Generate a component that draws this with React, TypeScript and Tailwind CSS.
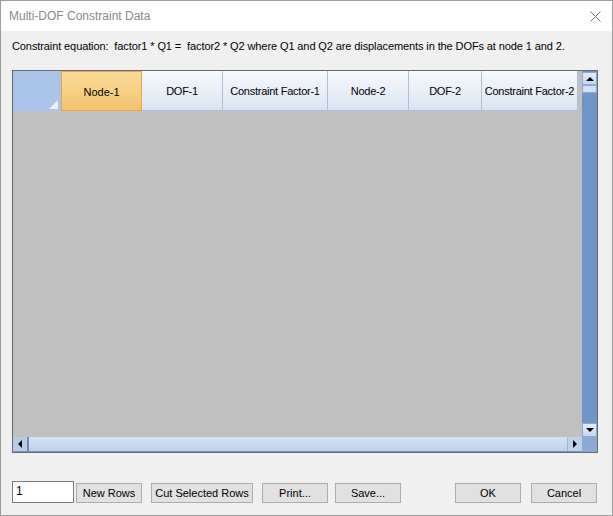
import { useState } from "react";

const columns = [
  { label: "Node-1", w: "w-[81px]", active: true },
  { label: "DOF-1", w: "w-[81px]" },
  { label: "Constraint Factor-1", w: "w-[105px]" },
  { label: "Node-2", w: "w-[81px]" },
  { label: "DOF-2", w: "w-[73px]" },
  { label: "Constraint Factor-2", w: "w-[96px]" },
];

function Tri({ dir }: { dir: "up" | "down" | "left" | "right" }) {
  const pts = {
    up: "0,5 4,1 8,5",
    down: "0,1 8,1 4,5",
    left: "5,0 5,8 1,4",
    right: "1,0 1,8 5,4",
  }[dir];
  const horiz = dir === "left" || dir === "right";
  return (
    <svg width={horiz ? 6 : 8} height={horiz ? 8 : 6} viewBox={horiz ? "0 0 6 8" : "0 0 8 6"}>
      <polygon points={pts} fill="#000" />
    </svg>
  );
}

function Btn({ children, className = "" }: { children: React.ReactNode; className?: string }) {
  return (
    <button className={`h-[20px] w-[66px] border border-[#adadad] bg-[#e1e1e1] text-[11px] leading-none text-black ${className}`}>
      {children}
    </button>
  );
}

export default function App() {
  const [rows, setRows] = useState("1")

  return (
    <div
      className="flex h-[516px] w-[613px] flex-col border border-[#9c9c9c] bg-[#f0f0f0] text-black"
      style={{ fontFamily: '"Liberation Sans", Arial, sans-serif' }}
    >
      {/* title bar */}
      <div className="flex h-[30px] shrink-0 items-center justify-between bg-white pl-[8px] pr-[11px]">
        <span className="text-[12px] text-[#8a8a8a]">Multi-DOF Constraint Data</span>
        <svg width="11" height="11" viewBox="0 0 11 11">
          <path d="M0.5 0.5 L10.5 10.5 M10.5 0.5 L0.5 10.5" stroke="#6f6f6f" strokeWidth="1" />
        </svg>
      </div>

      <div className="flex flex-1 flex-col px-[11px]">
        <p className="mt-[9px] text-[11px] leading-[13px] tracking-[-0.1px]">
          Constraint equation:&nbsp; factor1 * Q1 =&nbsp; factor2 * Q2 where Q1 and Q2 are displacements in the DOFs at node 1 and 2.
        </p>

        {/* grid */}
        <div className="mt-[17px] flex h-[383px] w-[586px] flex-col border border-[#666a70]">
          <div className="flex h-[366px]">
            <div className="flex flex-1 flex-col bg-[#c0c0c0]">
              <div className="flex h-[40px]">
                <div className="relative w-[48px] bg-[#aac4e9]">
                  <svg className="absolute bottom-[2px] right-[3px]" width="9" height="9" viewBox="0 0 9 9">
                    <polygon points="9,0 9,9 0,9" fill="#eef3fb" />
                  </svg>
                </div>
                {columns.map((c) =>
                  c.active ? (
                    <div
                      key={c.label}
                      className={`${c.w} flex items-center justify-center whitespace-nowrap border border-[#e8a64c] bg-gradient-to-b from-[#f9da98] to-[#f3c46c] pt-[2px] text-[11px]`}
                    >
                      {c.label}
                    </div>
                  ) : (
                    <div
                      key={c.label}
                      className={`${c.w} flex items-center justify-center overflow-hidden whitespace-nowrap border-r border-b border-[#a9c1df] bg-gradient-to-b from-[#f7f9fc] to-[#dbe5f1] pt-[2px] text-[11px] tracking-[-0.25px]`}
                    >
                      {c.label}
                    </div>
                  )
                )}
              </div>
            </div>
            {/* vertical scrollbar */}
            <div className="flex w-[15px] flex-col bg-[#6f95c8]">
              <div className="mt-[1px] flex h-[13px] items-center justify-center border border-[#8eaad2] bg-gradient-to-b from-[#e4edf8] to-[#c5d7ee]">
                <Tri dir="up" />
              </div>
              <div className="h-[8px] border border-[#8eaad2] bg-[#d3e0f1]" />
              <div className="flex-1" />
              <div className="flex h-[14px] items-center justify-center border border-[#8eaad2] bg-gradient-to-b from-[#e4edf8] to-[#c5d7ee]">
                <Tri dir="down" />
              </div>
            </div>
          </div>
          {/* horizontal scrollbar */}
          <div className="flex h-[15px]">
            <div className="flex flex-1 border-b border-[#7d97be] bg-gradient-to-b from-[#d6e4f5] to-[#bcd1ec]">
              <div className="flex w-[16px] items-center justify-center border-r-2 border-[#6f8bb3] bg-[#b7cbe6]">
                <Tri dir="left" />
              </div>
              <div className="flex-1 border-r border-[#9fb6d8]" />
              <div className="flex w-[14px] items-center justify-center bg-[#bfd2ec]">
                <Tri dir="right" />
              </div>
            </div>
            <div className="w-[15px] bg-[#8aa9d4]" />
          </div>
        </div>

        {/* bottom row */}
        <div className="mt-[28px] flex items-end">
          <input
            value={rows}
            onChange={(e) => setRows(e.target.value)}
            className="h-[22px] w-[62px] border border-[#7a7a7a] bg-white px-[3px] pb-[3px] text-[12px] outline-none"
          />
          <Btn className="ml-[2px]">New Rows</Btn>
          <Btn className="ml-[9px] w-[102px]">Cut Selected Rows</Btn>
          <Btn className="ml-[9px]">Print...</Btn>
          <Btn className="ml-[7px]">Save...</Btn>
          <Btn className="ml-auto">OK</Btn>
          <Btn className="ml-[10px] mr-[4px]">Cancel</Btn>
        </div>
      </div>
    </div>
  )
}
